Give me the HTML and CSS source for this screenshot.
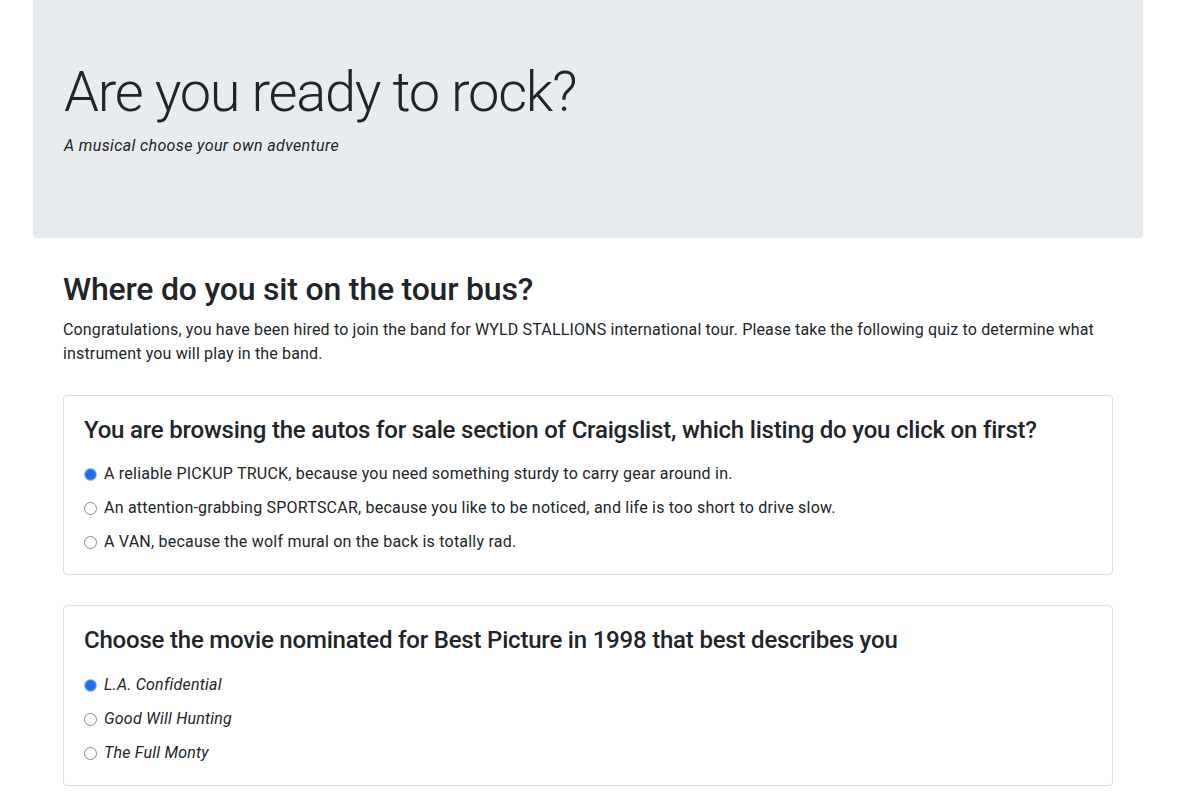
FILE: index.html
```html
<!DOCTYPE html>
<html lang="en">
<head>
<meta charset="utf-8">
<title>Are you ready to rock?</title>
<link rel="stylesheet" href="styles.css">
</head>
<body>
<div class="page">
  <header class="jumbotron">
    <h1 class="display">Are you ready to rock?</h1>
    <p class="tagline">A musical choose your own adventure</p>
  </header>
  <main class="quiz">
    <h2 class="quiz-title">Where do you sit on the tour bus?</h2>
    <p class="intro">Congratulations, you have been hired to join the band for WYLD STALLIONS international tour. Please take the following quiz to determine what instrument you will play in the band.</p>
    <section class="card">
      <h4 class="question">You are browsing the autos for sale section of Craigslist, which listing do you click on first?</h4>
      <div class="options">
        <label class="option"><input type="radio" name="q1" checked><span>A reliable PICKUP TRUCK, because you need something sturdy to carry gear around in.</span></label>
        <label class="option"><input type="radio" name="q1"><span>An attention-grabbing SPORTSCAR, because you like to be noticed, and life is too short to drive slow.</span></label>
        <label class="option"><input type="radio" name="q1"><span>A VAN, because the wolf mural on the back is totally rad.</span></label>
      </div>
    </section>
    <section class="card">
      <h4 class="question">Choose the movie nominated for Best Picture in 1998 that best describes you</h4>
      <div class="options">
        <label class="option"><input type="radio" name="q2" checked><em>L.A. Confidential</em></label>
        <label class="option"><input type="radio" name="q2"><em>Good Will Hunting</em></label>
        <label class="option"><input type="radio" name="q2"><em>The Full Monty</em></label>
      </div>
    </section>
  </main>
</div>
</body>
</html>
```
FILE: styles.css
```css
html, body {
  margin: 0;
  padding: 0;
  background: #fff;
}
body {
  font-family: Roboto, "Liberation Sans", sans-serif;
  font-size: 16px;
  line-height: 1.5;
  color: #212529;
}
.page {
  width: 1110px;
  margin-left: 33px;
}
.jumbotron {
  background: #e9ecef;
  border-radius: 0 0 4px 4px;
  padding: 59px 31px 64px;
  margin-bottom: 32px;
}
.display {
  font-size: 56px;
  font-weight: 300;
  line-height: 1.2;
  margin: 0 0 8px;
  letter-spacing: -1.3px;
}
.tagline {
  font-style: italic;
  margin: 0 0 16px;
  letter-spacing: 0.37px;
}
.quiz {
  padding: 0 30px;
  display: flex;
  flex-direction: column;
}
.quiz-title {
  font-size: 32px;
  font-weight: 500;
  line-height: 1.2;
  margin: 0 0 9px;
  letter-spacing: -0.2px;
}
.intro {
  margin: 0 0 29px;
  letter-spacing: 0.15px;
}
.card {
  border: 1px solid rgba(0,0,0,.125);
  border-radius: 4px;
  padding: 20px;
  margin-bottom: 30px;
}
.question {
  font-size: 24px;
  font-weight: 500;
  line-height: 1.2;
  margin: 0 0 18px;
  letter-spacing: -0.2px;
}
.options {
  display: flex;
  flex-direction: column;
  gap: 10px;
}
.option {
  display: flex;
  align-items: center;
  height: 24px;
  letter-spacing: 0.22px;
}
.option input {
  appearance: none;
  -webkit-appearance: none;
  width: 13px;
  height: 13px;
  margin: 0 7px 0 0;
  border: 1px solid #8a8a8a;
  border-radius: 50%;
  background: #fff;
  box-sizing: border-box;
  flex: none;
}
.option input:checked {
  background: #1f6fe5;
  border: 1px solid #9cbef5;
  box-shadow: inset 0 0 0 1px #3b82f0;
}
.option em {
  font-style: italic;
}
```
